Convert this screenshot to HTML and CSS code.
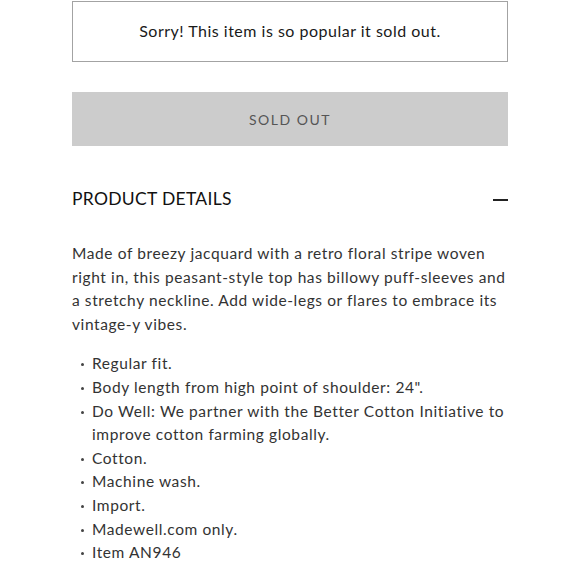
FILE: index.html
```html
<!DOCTYPE html>
<html>
<head>
<meta charset="utf-8">
<link rel="stylesheet" href="styles.css">
</head>
<body>
<div class="page">
  <div class="notice">Sorry! This item is so popular it sold out.</div>
  <div class="soldout">SOLD OUT</div>
  <div class="details-head">
    <span class="details-title">PRODUCT DETAILS</span>
    <span class="minus"></span>
  </div>
  <p class="desc">Made of breezy jacquard with a retro floral stripe woven right in, this peasant-style top has billowy puff-sleeves and a stretchy neckline. Add wide-legs or flares to embrace its vintage-y vibes.</p>
  <ul class="bullets">
    <li>Regular fit.</li>
    <li>Body length from high point of shoulder: 24".</li>
    <li>Do Well: We partner with the Better Cotton Initiative to improve cotton farming globally.</li>
    <li>Cotton.</li>
    <li>Machine wash.</li>
    <li>Import.</li>
    <li>Madewell.com only.</li>
    <li>Item AN946</li>
  </ul>
</div>
</body>
</html>
```
FILE: styles.css
```css
html, body {
  margin: 0;
  padding: 0;
  background: #fff;
}
body {
  font-family: Lato, "Noto Sans", sans-serif;
  color: #222;
}
.page {
  width: 436px;
  margin-left: 72px;
  padding-top: 1px;
}
.notice {
  box-sizing: border-box;
  height: 61px;
  padding-bottom: 3px;
  border: 1.5px solid #a3a3a3;
  display: flex;
  align-items: center;
  justify-content: center;
  font-size: 16px;
  letter-spacing: 0.5px;
  color: #1a1a1a;
}
.soldout {
  margin-top: 30px;
  height: 54px;
  background: #cccccc;
  display: flex;
  align-items: center;
  justify-content: center;
  font-size: 14px;
  letter-spacing: 1.5px;
  color: #555;
}
.details-head {
  margin-top: 40px;
  height: 24px;
  display: flex;
  align-items: center;
  justify-content: space-between;
}
.details-title {
  font-size: 17.5px;
  letter-spacing: 0.3px;
  color: #111;
}
.minus {
  width: 15px;
  height: 2px;
  background: #222;
  margin-top: 4px;
}
.desc {
  margin: 32px 0 0 0;
  font-size: 15.5px;
  line-height: 23.6px;
  letter-spacing: 0.6px;
  color: #333;
}
.bullets {
  margin: 16px 0 0 0;
  padding: 0;
  list-style: none;
  font-size: 15.5px;
  line-height: 23.6px;
  letter-spacing: 0.6px;
  color: #333;
}
.bullets li {
  position: relative;
  padding-left: 20px;
}
.bullets li::before {
  content: "";
  position: absolute;
  left: 9px;
  top: 11px;
  width: 3px;
  height: 3px;
  border-radius: 50%;
  background: #444;
}
```
